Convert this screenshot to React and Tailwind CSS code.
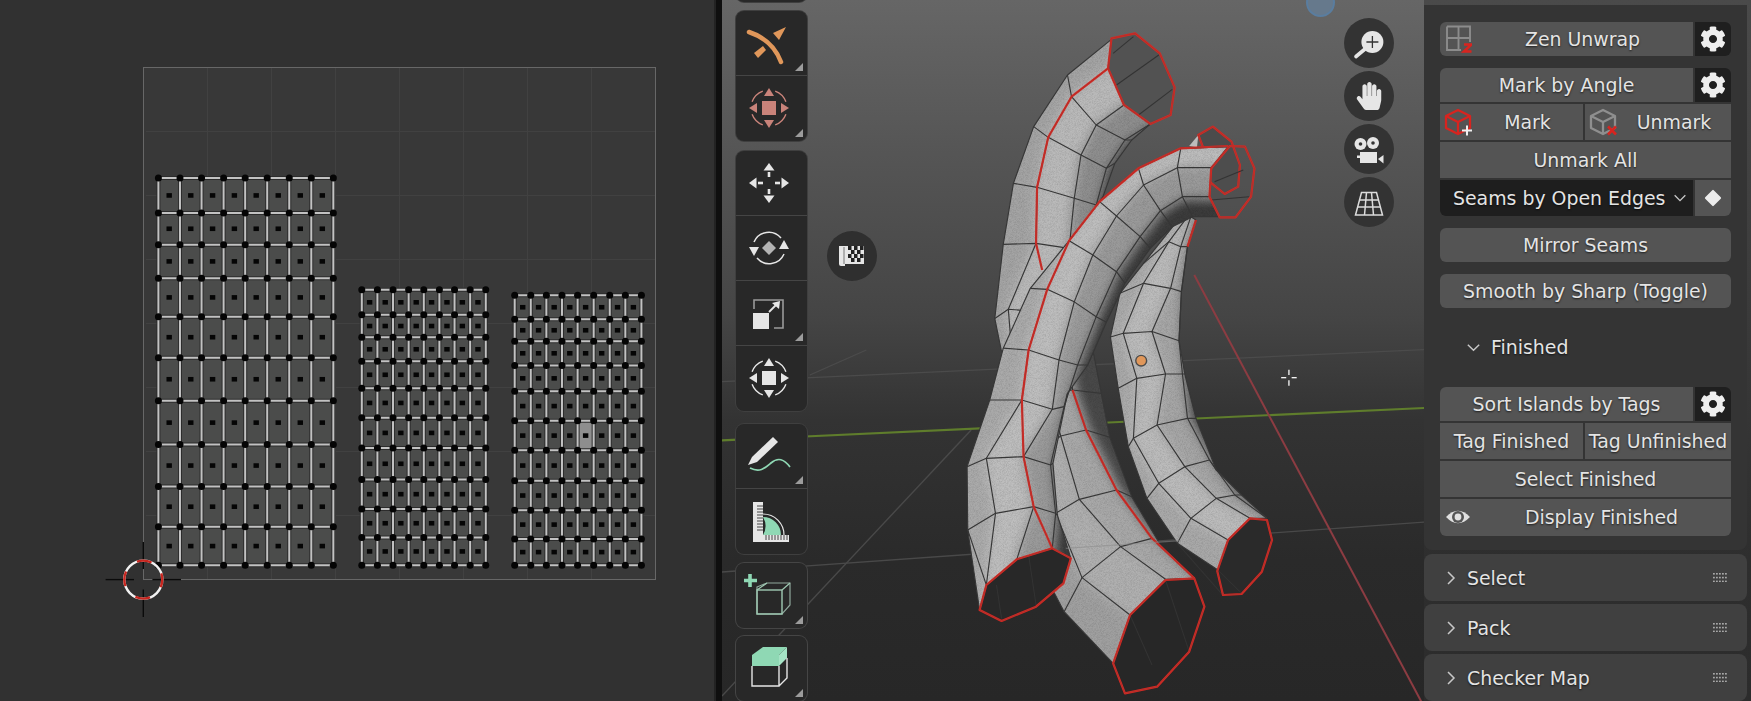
import React from "react";
import { FaCog, FaHandPaper } from "react-icons/fa";

const pts = (a) => a.map((p) => p.join(",")).join(" ");

/* ---------- UV editor drawing ---------- */
const fy = (a) => a.map((y) => y / 2.236);
const fx = (a) => a.map((x) => x / 2.178);
const islands = [
  {
    xs: fx([345, 392, 439, 487, 534, 582, 630, 678, 726]),
    ys: fy([398, 476, 547, 622, 708, 800, 896, 994, 1088, 1178, 1264]),
  },
  {
    xs: fx([788, 822, 856, 890, 923, 957, 990, 1024, 1058]),
    ys: fy([648, 704, 754, 808, 868, 934, 1002, 1072, 1138, 1202, 1264]),
  },
  {
    xs: fx([1121, 1156, 1190, 1224, 1258, 1293, 1328, 1362, 1397]),
    ys: fy([660, 714, 763, 817, 875, 941, 1007, 1075, 1141, 1205, 1264]),
    hi: [4, 5],
  },
];

function Island({ xs, ys, hi }) {
  const x0 = xs[0];
  const x1 = xs[xs.length - 1];
  const y0 = ys[0];
  const y1 = ys[ys.length - 1];
  return (
    <g>
      <rect x={x0} y={y0} width={x1 - x0} height={y1 - y0} fill="#4b4c4b" />
      {hi && (
        <rect x={xs[hi[0]]} y={ys[hi[1]]} width={xs[hi[0] + 1] - xs[hi[0]]} height={ys[hi[1] + 1] - ys[hi[1]]} fill="#8e8e8e" />
      )}
      {[["#2c2c2c", 4], ["#c2c2c2", 2]].map(([c, w]) => (
        <g key={c} stroke={c} strokeWidth={w}>
          {xs.map((x) => <line key={x} x1={x} x2={x} y1={y0} y2={y1} />)}
          {ys.map((y) => <line key={y} y1={y} y2={y} x1={x0} x2={x1} />)}
        </g>
      ))}
      {xs.map((x) => ys.map((y) => <circle key={x + "-" + y} cx={x} cy={y} r="3.5" fill="#050505" />))}
      {xs.slice(0, -1).map((x, i) =>
        ys.slice(0, -1).map((y, j) => (
          <rect
            key={x + "_" + y}
            x={(x + xs[i + 1]) / 2 - 2.7}
            y={(y + ys[j + 1]) / 2 - 2.3}
            width="5.4"
            height="4.6"
            fill="#050505"
          />
        ))
      )}
    </g>
  );
}

function UvDrawing() {
  const vs = [1, 2, 3, 4, 5, 6, 7];
  return (
    <svg width="714" height="701" viewBox="0 0 714 701" className="block">
      <rect x="143.5" y="67.5" width="512" height="512" fill="#383838" stroke="#676767" strokeWidth="1" />
      <g stroke="#414141" strokeWidth="1.2">
        {vs.map((k) => <line key={k} x1={143.5 + 64 * k} x2={143.5 + 64 * k} y1="68" y2="579" />)}
        {vs.map((k) => <line key={k} y1={67.5 + 64 * k} y2={67.5 + 64 * k} x1="146" x2="655" />)}
      </g>
      {islands.map((d, i) => <Island key={i} {...d} />)}
      <g stroke="#0a0a0a" strokeWidth="1.4">
        <line x1="105.6" x2="134" y1="579.6" y2="579.6" />
        <line x1="152.4" x2="181" y1="579.6" y2="579.6" />
        <line x1="143.3" x2="143.3" y1="542" y2="569" />
        <line x1="143.3" x2="143.3" y1="589.4" y2="617" />
      </g>
      <circle cx="143.3" cy="579.6" r="19" fill="none" stroke="#f2f2f2" strokeWidth="2.4" />
      <circle cx="143.3" cy="579.6" r="19" fill="none" stroke="#c8261f" strokeWidth="2.4" strokeDasharray="14.92 14.92" strokeDashoffset="7" />
    </svg>
  );
}

/* ---------- mesh drawing (units: 1/2.958 px across, 1/3 px down, origin 890,0) ---------- */
const Y = (y) => (y >= 1035 ? y + 15 : y <= 900 ? y : y + (15 * (y - 900)) / 135);
const fix = (a) => a.map(([x, y]) => [x, Y(y)]);
const fixRows = (r) => r.map(fix);

const extrap = (a, b, t) => a.map((p, i) => [p[0] + (p[0] - b[i][0]) * t, p[1] + (p[1] - b[i][1]) * t]);

function Mesh({ id, rows, shades }) {
  const n = rows[0].length;
  const end = rows.length - 1;
  const outline = [
    ...rows[0],
    ...rows.slice(1, end).map((r) => r[n - 1]),
    ...[...rows[end]].reverse(),
    ...rows.slice(1, end).reverse().map((r) => r[0]),
  ];
  const wide = [extrap(rows[0], rows[1], 0.6), ...rows, extrap(rows[end], rows[end - 1], 0.6)];
  const strip = (i) => pts([...wide.map((r) => r[i]), ...[...wide].reverse().map((r) => r[i + 1])]);
  const last = shades.length - 1;
  return (
    <g>
      <clipPath id={id}><polygon points={pts(outline)} /></clipPath>
      <g clipPath={`url(#${id})`}>
        <g filter="url(#soft)">
          <polygon points={strip(0)} fill={shades[0]} stroke={shades[0]} strokeWidth="70" />
          <polygon points={strip(last)} fill={shades[last]} stroke={shades[last]} strokeWidth="70" />
          {shades.slice(1, last).map((c, i) => (
            <polygon key={i} points={strip(i + 1)} fill={c} stroke={c} strokeWidth="10" />
          ))}
        </g>
        <rect x="0" y="0" width="1600" height="2200" filter="url(#grain)" opacity="0.16" />
      </g>
      <g fill="none" stroke="#363636" strokeWidth="3.4" strokeLinejoin="round">
        {rows.map((r, i) => <polyline key={i} points={pts(r)} />)}
        {rows[0].map((_, c) => <polyline key={c} points={pts(rows.map((r) => r[c]))} />)}
      </g>
    </g>
  );
}

const Seam = ({ p, closed }) => {
  const T = closed ? "polygon" : "polyline";
  return (
    <g fill="none" strokeLinejoin="round">
      <T points={pts(fix(p))} stroke="#dc2720" strokeWidth="6.5" />
      <T points={pts(fix(p))} stroke="#6a4040" strokeWidth="1.2" />
    </g>
  );
};

const Wire = ({ l }) => (
  <g stroke="#333" strokeWidth="3" fill="none">
    {l.map((s, i) => <polyline key={i} points={pts(fix(s))} />)}
  </g>
);

const Fill = ({ p, c, o }) => <polygon points={pts(fix(p))} fill={c} fillOpacity={o} />;

const aTop = fixRows([
  [[655, 118], [645, 205], [692, 315], [770, 372], [770, 372]],
  [[525, 225], [537, 290], [610, 375], [695, 420], [715, 420]],
  [[425, 380], [468, 412], [565, 465], [640, 505], [665, 490]],
  [[365, 550], [435, 562], [545, 595], [610, 615], [630, 590]],
  [[335, 733], [432, 730], [530, 745], [590, 760], [620, 760]],
  [[310, 950], [350, 925], [420, 930], [500, 950], [560, 950]],
  [[330, 1040], [360, 1040], [420, 1040], [480, 1040], [520, 1040]],
]);
const aBot = fixRows([
  [[480, 800], [500, 800], [520, 800], [560, 800], [640, 800]],
  [[400, 1035], [430, 1035], [470, 1035], [530, 1035], [600, 1035]],
  [[380, 1135], [420, 1135], [470, 1165], [540, 1155], [625, 1165]],
  [[400, 1335], [450, 1335], [505, 1293], [580, 1275], [650, 1297]],
  [[430, 1655], [490, 1525], [560, 1483], [670, 1455], [715, 1475]],
  [[515, 1820], [568, 1718], [682, 1625], [775, 1600], [800, 1620]],
  [[660, 1975], [710, 1830], [815, 1723], [900, 1720], [900, 1720]],
]);
const bRows = fixRows([
  [[1000, 440], [1000, 440], [950, 503], [945, 590], [972, 650]],
  [[860, 445], [860, 445], [850, 503], [865, 590], [895, 650]],
  [[735, 505], [735, 505], [750, 555], [800, 632], [835, 680]],
  [[620, 605], [620, 605], [670, 648], [740, 710], [770, 745]],
  [[530, 722], [530, 722], [600, 765], [670, 815], [695, 850]],
  [[415, 865], [465, 868], [545, 905], [610, 945], [640, 960]],
  [[335, 1030], [410, 1035], [500, 1065], [555, 1080], [585, 1080]],
  [[295, 1185], [390, 1185], [480, 1213], [515, 1205], [525, 1165]],
  [[228, 1385], [285, 1360], [395, 1355], [475, 1380], [482, 1375]],
  [[230, 1575], [312, 1525], [425, 1505], [490, 1525], [495, 1530]],
  [[265, 1815], [285, 1740], [375, 1663], [480, 1630], [535, 1660]],
]);
const cRows = fixRows([
  [[860, 650], [880, 650], [890, 650], [905, 660], [905, 660]],
  [[750, 790], [825, 725], [860, 740], [880, 740], [880, 740]],
  [[680, 880], [750, 850], [830, 865], [862, 875], [862, 875]],
  [[652, 1000], [690, 990], [775, 985], [855, 1010], [855, 1010]],
  [[675, 1150], [730, 1120], [815, 1107], [865, 1107], [872, 1107]],
  [[705, 1325], [720, 1300], [790, 1260], [880, 1240], [905, 1240]],
  [[760, 1480], [795, 1435], [872, 1385], [945, 1365], [965, 1395]],
  [[850, 1615], [890, 1540], [965, 1480], [1020, 1470], [1040, 1470]],
  [[970, 1695], [1000, 1605], [1065, 1540], [1115, 1540], [1115, 1540]],
]);

const aRingTop = [[655, 115], [725, 100], [798, 160], [842, 262], [830, 345], [770, 372], [692, 315], [645, 205]];
const aRingBot = [[660, 1975], [695, 2065], [790, 2045], [885, 1940], [930, 1805], [900, 1720], [815, 1725], [710, 1830]];
const bRingTop = [[1005, 438], [1050, 440], [1078, 505], [1068, 590], [1022, 652], [975, 652], [945, 590], [950, 505]];
const bRingBot = [[265, 1815], [330, 1848], [432, 1805], [513, 1735], [535, 1660], [480, 1630], [375, 1663], [285, 1740]];
const cRingTop = [[912, 405], [955, 380], [1010, 425], [1035, 495], [1030, 560], [990, 582], [945, 545], [950, 505]];
const cRingBot = [[968, 1698], [985, 1770], [1040, 1767], [1100, 1700], [1130, 1605], [1115, 1545], [1065, 1540], [1000, 1605]];

function MeshDrawing() {
  return (
    <svg width="702" height="701" viewBox="722 0 702 701" className="absolute inset-0">
      <defs>
        <filter id="soft" x="-20%" y="-20%" width="140%" height="140%"><feGaussianBlur stdDeviation="16" /></filter>
        <filter id="grain" x="0" y="0" width="100%" height="100%">
          <feTurbulence type="fractalNoise" baseFrequency="0.9" numOctaves="1" />
          <feColorMatrix values="0 0 0 0 0 0 0 0 0 0 0 0 0 0 0 0 0 0 1.6 -0.6" />
        </filter>
      </defs>
      <g transform="translate(890 0) scale(0.33807 0.33333)">
        <g stroke="#4d4d4d" strokeWidth="4" fill="none" opacity="0.9">
          <line x1="-497" y1="1145" x2="1600" y2="1048" />
          <line x1="-497" y1="1716" x2="1600" y2="1565" />
          <line x1="-497" y1="2088" x2="240" y2="1290" />
          <line x1="-237" y1="1125" x2="-70" y2="1050" />
        </g>
        <line x1="-497" y1="1321" x2="1600" y2="1223" stroke="#5f7d2c" strokeWidth="6.5" />
        <line x1="900" y1="825" x2="1590" y2="2140" stroke="#8c3c42" strokeWidth="6" />

        {/* tube A */}
        <Fill p={aRingTop} c="#525252" />
        <Wire l={[[[720, 110], [660, 160]], [[795, 165], [670, 255]], [[835, 268], [735, 345]]]} />
        <Mesh id="ma" rows={aTop} shades={["#a4a4a4", "#bababa", "#8e8e8e", "#343434"]} />
        <Seam p={aRingTop} closed />
        <Seam p={[[645, 205], [537, 290], [468, 412], [435, 562], [432, 730], [450, 810]]} />
        <Fill p={aRingBot} c="#272727" />
        <Wire l={[[[710, 1830], [775, 1980]], [[815, 1725], [885, 1940]]]} />
        <Mesh id="mb" rows={aBot} shades={["#a0a0a0", "#b0b0b0", "#a8a8a8", "#4a4a4a"]} />
        <Seam p={aRingBot} closed />
        <Seam p={[[540, 1155], [580, 1275], [670, 1455], [775, 1600], [900, 1720]]} />

        {/* tube C */}
        <Fill p={[[885, 438], [912, 405], [908, 442]]} c="#bdbdbd" />
        <Fill p={cRingTop} c="#4b4b4b" />
        <Fill p={cRingBot} c="#2a2a2a" />
        <Mesh id="mc" rows={cRows} shades={["#a9a9a9", "#bcbcbc", "#a6a6a6", "#424242"]} />
        <Wire l={[[[850, 1615], [980, 1765]], [[970, 1695], [1040, 1765]]]} />
        <Seam p={cRingBot} closed />
        <Seam p={[[905, 660], [880, 740]]} />

        {/* tube B */}
        <Fill p={bRingTop} c="#4f4f4f" o="0.4" />
        <Seam p={cRingTop} closed />
        <Wire l={[[[1045, 510], [960, 545]], [[1062, 590], [950, 600]]]} />
        <Fill p={bRingBot} c="#282828" />
        <Wire l={[[[315, 1740], [330, 1840]], [[410, 1650], [432, 1800]]]} />
        <Mesh id="mm" rows={bRows} shades={["#aaaaaa", "#bebebe", "#9a9a9a", "#3a3a3a"]} />
        <Wire l={[[[230, 1575], [285, 1740]]]} />
        <Seam p={bRingTop} closed />
        <Seam p={bRingBot} closed />
        <Seam p={[[1000, 438], [860, 445], [735, 505], [620, 605], [530, 722], [465, 868], [410, 1035], [390, 1185], [395, 1355], [425, 1505], [480, 1630]]} />

        <line x1="520" y1="1645" x2="860" y2="1622" stroke="#8a8a8a" strokeWidth="4" opacity="0.55" />
        <circle cx="743" cy="1082" r="16" fill="#e0975a" stroke="#4a4a4a" strokeWidth="4" />
        <g stroke="#f4f4f4" strokeWidth="4">
          <line x1="1157" y1="1133" x2="1172" y2="1133" />
          <line x1="1188" y1="1133" x2="1203" y2="1133" />
          <line x1="1180" y1="1109" x2="1180" y2="1125" />
          <line x1="1180" y1="1141" x2="1180" y2="1157" />
        </g>
      </g>
    </svg>
  );
}

/* ---------- toolbar icons, 71x64 ---------- */
const Svg = ({ children }) => <svg width="71" height="64" viewBox="0 0 71 64" className="block">{children}</svg>;

const IconBow = () => (
  <Svg>
    <path d="M13 21 Q37 29 45 51" fill="none" stroke="#e0975a" strokeWidth="4.5" strokeLinecap="round" />
    <polygon points="37,22 50,16 43,29" fill="#e0975a" />
    <polygon points="18,42 27,35 30,39 22,47" fill="#e0975a" />
  </Svg>
);

const IconTransform = ({ c }) => (
  <Svg>
    <g transform="translate(33 32)" fill={c}>
      <rect x="-7" y="-7" width="14" height="14" />
      {[0, 90, 180, 270].map((a) => (
        <g key={a} transform={`rotate(${a})`}>
          <polygon points="0,-20 5,-12 -5,-12" />
          <path d="M6.2 -16.9 A18 18 0 0 1 16.9 -6.2" fill="none" stroke={c} strokeWidth="1.4" />
        </g>
      ))}
    </g>
  </Svg>
);

const IconMove = () => (
  <Svg>
    <g transform="translate(33 32)" fill="#e6e6e6">
      {[0, 90, 180, 270].map((a) => (
        <g key={a} transform={`rotate(${a})`}>
          <polygon points="0,-20 5.5,-12.5 -5.5,-12.5" />
          <rect x="-1.3" y="-11" width="2.6" height="5" />
        </g>
      ))}
    </g>
  </Svg>
);

const IconRotate = () => (
  <Svg>
    <g transform="translate(33 32)">
      <polygon points="0,-7 7,0 0,7 -7,0" fill="#b4b4b4" />
      <path d="M-15 -6 A16 16 0 0 1 12 -10" fill="none" stroke="#e6e6e6" strokeWidth="1.5" />
      <path d="M15 6 A16 16 0 0 1 -12 10" fill="none" stroke="#e6e6e6" strokeWidth="1.5" />
      <polygon points="-15,8 -20,-1 -10,-1" fill="#e6e6e6" />
      <polygon points="15,-8 20,1 10,1" fill="#e6e6e6" />
    </g>
  </Svg>
);

const IconScale = () => (
  <Svg>
    <path d="M18 28 V19 H47 V47 H38" fill="none" stroke="#9a9a9a" strokeWidth="1.6" />
    <rect x="17" y="32" width="16" height="16" fill="#e6e6e6" />
    <path d="M33 31 L42 22" stroke="#e6e6e6" strokeWidth="1.8" />
    <polygon points="44,20 43,28 36,22" fill="#e6e6e6" />
  </Svg>
);

const IconDraw = () => (
  <Svg>
    <polygon points="12,41 16,33 37,13 42,18 21,38" fill="#e6e6e6" />
    <path d="M14 44 C24 49 29 44 35 39 C42 33 48 35 54 43" fill="none" stroke="#8fd8b4" strokeWidth="1.7" />
  </Svg>
);

const IconMeasure = () => (
  <Svg>
    <path d="M27 46 A18 18 0 0 0 27 28 A18 18 0 0 1 45 46 Z" fill="#8fd8b4" />
    <path d="M27 25 A21 21 0 0 1 48 46" fill="none" stroke="#e6e6e6" strokeWidth="1.2" />
    <rect x="17" y="13" width="10" height="40" fill="#e6e6e6" />
    <rect x="17" y="46" width="36" height="7" fill="#e6e6e6" />
    <g stroke="#333" strokeWidth="0.9">
      {[17, 20, 23, 26, 29, 32, 35, 38, 41].map((y) => <line key={y} x1="21" x2="27" y1={y} y2={y} />)}
      {[30, 33, 36, 39, 42, 45, 48, 51].map((x) => <line key={x} x1={x} x2={x} y1="46" y2="51" />)}
    </g>
  </Svg>
);

const IconAdd = () => (
  <Svg>
    <path d="M21 24 L31 20 L54 20 V42 L46 51 H21 Z" fill="none" stroke="#8fa89c" strokeWidth="1.2" />
    <rect x="21" y="27" width="25" height="24" fill="none" stroke="#9ec9b2" strokeWidth="1.4" />
    <path d="M21 27 L31 20 M46 27 L54 20" stroke="#9ec9b2" strokeWidth="1.2" fill="none" />
    <path d="M14 11 V24 M8 17.5 H21" stroke="#8fd8b4" strokeWidth="3.6" />
  </Svg>
);

const IconExtrude = () => (
  <Svg>
    <polygon points="16,19 27,11 51,11 43,19" fill="#8fd8b4" />
    <polygon points="43,19 51,11 51,22 43,30" fill="#a5e3c5" />
    <rect x="16" y="19" width="27" height="11" fill="#8fd8b4" />
    <path d="M16 30 V50 H43 V30 M43 50 L51 42 V22" fill="none" stroke="#e6e6e6" strokeWidth="1.4" />
  </Svg>
);

const Tool = ({ children, more, divider = true }) => (
  <div className={`relative h-[65px] ${divider ? "border-b border-[#454545]" : ""}`}>
    {children}
    {more && (
      <svg width="8" height="8" viewBox="0 0 8 8" className="absolute right-[4px] bottom-[4px]">
        <polygon points="8,0 8,8 0,8" fill="#9c9c9c" />
      </svg>
    )}
  </div>
);

const Group = ({ children, className = "" }) => (
  <div className={`rounded-[8px] ring-1 ring-[#3f3f3f] bg-[#282828] overflow-hidden ${className}`}>{children}</div>
);

function Toolbar() {
  return (
    <div className="absolute left-[14px] top-[-16px] w-[71px] flex flex-col">
      <Group className="h-[18px]"><div /></Group>
      <Group className="mt-[9px]">
        <Tool more><IconBow /></Tool>
        <Tool more divider={false}><IconTransform c="#c9837a" /></Tool>
      </Group>
      <Group className="mt-[10px]">
        <Tool><IconMove /></Tool>
        <Tool><IconRotate /></Tool>
        <Tool more><IconScale /></Tool>
        <Tool divider={false}><IconTransform c="#e6e6e6" /></Tool>
      </Group>
      <Group className="mt-[13px] bg-[#2a2a2a]">
        <Tool more><IconDraw /></Tool>
        <Tool divider={false}><IconMeasure /></Tool>
      </Group>
      <Group className="mt-[9px] bg-[#2a2a2a] ring-[#454545]">
        <Tool more divider={false}><IconAdd /></Tool>
      </Group>
      <Group className="mt-[8px] bg-[#2a2a2a] ring-[#454545]">
        <Tool more divider={false}><IconExtrude /></Tool>
      </Group>
    </div>
  );
}

/* ---------- round gizmo buttons ---------- */
const Round = ({ className, children }) => (
  <div className={`w-[50px] h-[50px] rounded-full flex items-center justify-center ${className}`}>{children}</div>
);

function Gizmos() {
  return (
    <>
      <div className="absolute left-[584px] top-[-12px] w-[29px] h-[29px] rounded-full bg-[#66798c] border-2 border-[#5a7d9f]" />
      <div className="absolute left-[622px] top-[18px] flex flex-col gap-[3px]">
        <Round className="bg-[#333333]">
          <svg width="50" height="50" viewBox="0 0 50 50">
            <line x1="21" y1="31" x2="12" y2="38.5" stroke="#e6e6e6" strokeWidth="3.6" strokeLinecap="round" />
            <circle cx="28.4" cy="24" r="11" fill="#e6e6e6" />
            <path d="M28.4 18 V30 M22.4 24 H34.4" stroke="#333" strokeWidth="1.3" />
          </svg>
        </Round>
        <Round className="bg-[#333333]"><FaHandPaper size={28} color="#e6e6e6" /></Round>
        <Round className="bg-[#333333]">
          <svg width="50" height="50" viewBox="0 0 50 50">
            <circle cx="16.5" cy="20" r="6" fill="#e6e6e6" />
            <circle cx="29" cy="19" r="6" fill="#e6e6e6" />
            <circle cx="16.5" cy="20" r="1.8" fill="#333" />
            <circle cx="29" cy="19" r="1.8" fill="#333" />
            <rect x="16" y="28" width="17" height="11" fill="#e6e6e6" />
            <rect x="13" y="31.5" width="3" height="2.5" fill="#e6e6e6" />
            <polygon points="34,35 39.5,31 39.5,39.5" fill="#e6e6e6" />
          </svg>
        </Round>
        <Round className="bg-[#333333]">
          <svg width="50" height="50" viewBox="0 0 50 50" fill="none" stroke="#dcdcdc" strokeWidth="1.5">
            <polygon points="17.5,15.5 32.5,15.5 38.5,38 11.5,38" />
            <path d="M15.5 23 H34.5 M13.5 30 H36.5 M22.5 15.5 L20.5 38 M27.5 15.5 L29.5 38" />
          </svg>
        </Round>
      </div>
      <Round className="absolute left-[105px] top-[231px] bg-[#2f2f2f]">
        <svg width="50" height="50" viewBox="0 0 50 50">
          <path d="M12 15 H37 V33 H18 V35 H14 Q12 35 12 33 Z" fill="#e6e6e6" />
          <path d="M17 16 V33" stroke="#777" strokeWidth="1" />
          <g fill="#222">
            {[[21, 15], [27, 15], [33, 15], [24, 19], [30, 19], [21, 23], [27, 23], [33, 23], [24, 27], [30, 27]].map(([x, y]) => (
              <rect key={x + "-" + y} x={x} y={y} width="3.5" height="4" />
            ))}
          </g>
        </svg>
      </Round>
    </>
  );
}

/* ---------- sidebar ---------- */
const txt = "text-[#e4e4e4] text-[18.9px] leading-none [text-shadow:0_1px_2px_#000000b0] whitespace-nowrap";

const Btn = ({ children, icon, className = "", h = "h-[36px]" }) => (
  <div className={`flex items-center bg-[#545454] ${h} ${className} ${txt}`}>
    {icon && <span className="w-[32px] h-full shrink-0">{icon}</span>}
    <span className="flex-1 text-center">{children}</span>
  </div>
);

const Gear = ({ className = "" }) => (
  <div className={`w-[36px] ml-[2px] shrink-0 bg-[#1f1f1f] flex items-center justify-center ${className}`}>
    <FaCog size={26} color="#eeeeee" />
  </div>
);

const ZenIcon = () => (
  <svg width="32" height="34" viewBox="0 0 32 34">
    <path d="M7 4.5 H30 V20 M7 4.5 V28 H21 M7 16 H30 M18.5 4.5 V28" fill="none" stroke="#8c8c8c" strokeWidth="1.9" />
    <path d="M24 22.5 H31.5 L24 29.5 H31.5" fill="none" stroke="#d8241f" strokeWidth="2.6" />
  </svg>
);

const CubeIcon = ({ c }) => (
  <g fill="none" stroke={c} strokeWidth="2.3" strokeLinejoin="round">
    <polygon points="18,6 30,12 30,24 18,30 6,24 6,12" />
    <path d="M6 12 L18 18 L30 12 M18 18 V30" />
  </g>
);

const MarkIcon = () => (
  <svg width="32" height="36" viewBox="0 0 32 36">
    <CubeIcon c="#d8241f" />
    <path d="M27 21.5 V31.5 M22 26.5 H32" stroke="#f0f0f0" strokeWidth="2" />
  </svg>
);

const UnmarkIcon = () => (
  <svg width="32" height="36" viewBox="0 0 32 36">
    <CubeIcon c="#8f8f8f" />
    <path d="M23 22.5 L31 30.5 M31 22.5 L23 30.5" stroke="#d8241f" strokeWidth="2.6" />
  </svg>
);

const EyeIcon = () => (
  <svg width="32" height="36" viewBox="0 0 32 36">
    <path d="M6 18 Q18 5.5 30 18 Q18 30.5 6 18 Z" fill="#e0e0e0" />
    <circle cx="18" cy="18" r="6" fill="#545454" />
    <circle cx="18" cy="18" r="3.4" fill="#e0e0e0" />
  </svg>
);

const Chevron = ({ dir = "down", size = 18, className = "" }) => (
  <svg width={size} height={size} viewBox="0 0 18 18" className={className} fill="none" stroke="#c8c8c8" strokeWidth="1.5">
    <path d={dir === "down" ? "M3 6 L9 12 L15 6" : "M6 3 L12 9 L6 15"} />
  </svg>
);

const PanelHead = ({ label, className = "" }) => (
  <div className={`h-[47px] rounded-[8px] bg-[#404040] flex items-center pl-[18px] pr-[19px] ${className}`}>
    <Chevron dir="right" size={18} className="shrink-0" />
    <span className={`ml-[7px] flex-1 ${txt} pt-[2px]`}>{label}</span>
    <svg width="15" height="9" viewBox="0 0 15 9" fill="#a8a8a8">
      {[0, 3.8, 7.6].map((y) =>
        [0, 3, 6, 9, 12].map((x) => <rect key={x + "-" + y} x={x} y={y} width="1.8" height="1.6" />)
      )}
    </svg>
  </div>
);

function Sidebar() {
  return (
    <aside className="w-[327px] h-[701px] shrink-0 bg-[linear-gradient(180deg,#4a4a4a_0%,#3a3a3a_45%,#2e2e2e_80%,#2c2c2c_100%)] pr-[4px] pt-[5px] flex flex-col overflow-hidden font-['DejaVu_Sans',sans-serif]">
      <div className="h-[545px] rounded-b-[8px] bg-[#343434] pt-[17px] px-[16px] flex flex-col">
        <div className="flex h-[34px]">
          <Btn h="h-[34px]" icon={<ZenIcon />} className="flex-1 rounded-l-[6px]">Zen Unwrap</Btn>
          <Gear className="rounded-r-[6px]" />
        </div>

        <div className="mt-[12px] flex flex-col gap-[2px]">
          <div className="flex h-[34px]">
            <Btn h="h-[34px]" className="flex-1 rounded-tl-[6px]">Mark by Angle</Btn>
            <Gear className="rounded-tr-[6px]" />
          </div>
          <div className="flex gap-[2px]">
            <Btn icon={<MarkIcon />} className="w-[143px]">Mark</Btn>
            <Btn icon={<UnmarkIcon />} className="flex-1">Unmark</Btn>
          </div>
          <Btn>Unmark All</Btn>
          <div className="flex h-[36px]">
            <div className={`flex-1 bg-[#1e1e1e] rounded-bl-[6px] flex items-center pl-[13px] pr-[5px] ${txt}`}>
              <span className="flex-1">Seams by Open Edges</span>
              <Chevron size={16} />
            </div>
            <div className="w-[36px] ml-[2px] bg-[#545454] rounded-br-[6px] flex items-center justify-center">
              <span className="w-[12px] h-[12px] rotate-45 bg-[#ececec] rounded-[1px]" />
            </div>
          </div>
        </div>

        <Btn h="h-[34px]" className="mt-[12px] rounded-[6px]">Mirror Seams</Btn>
        <Btn h="h-[34px]" className="mt-[12px] rounded-[6px]">Smooth by Sharp (Toggle)</Btn>

        <div className="h-[79px] flex items-center pl-[25px]">
          <Chevron size={17} />
          <span className={`ml-[9px] ${txt}`}>Finished</span>
        </div>

        <div className="flex flex-col gap-[2px]">
          <div className="flex h-[34px]">
            <Btn h="h-[34px]" className="flex-1 rounded-tl-[6px]">Sort Islands by Tags</Btn>
            <Gear className="rounded-tr-[6px]" />
          </div>
          <div className="flex gap-[2px]">
            <Btn className="w-[143px]">Tag Finished</Btn>
            <Btn className="flex-1">Tag Unfinished</Btn>
          </div>
          <Btn>Select Finished</Btn>
          <Btn h="h-[37px]" icon={<EyeIcon />} className="rounded-b-[6px]">Display Finished</Btn>
        </div>
      </div>

      <PanelHead label="Select" className="mt-[4px]" />
      <PanelHead label="Pack" className="mt-[3px]" />
      <PanelHead label="Checker Map" className="mt-[3px]" />
    </aside>
  );
}

export default function App() {
  return (
    <div className="w-[1751px] h-[701px] flex overflow-hidden bg-[#303030]">
      <div className="w-[714px] h-full shrink-0 bg-[#313131]">
        <UvDrawing />
      </div>
      <div className="w-[2px] h-full shrink-0 bg-[#232323]" />
      <div className="w-[6px] h-full shrink-0 bg-[#0f0f0f]" />
      <div className="relative w-[702px] h-full shrink-0 overflow-hidden bg-[linear-gradient(180deg,#666666_0%,#555555_22%,#454545_45%,#333333_60%,#2a2a2a_80%,#272727_100%)]">
        <MeshDrawing />
        <Toolbar />
        <Gizmos />
      </div>
      <Sidebar />
    </div>
  );
}
